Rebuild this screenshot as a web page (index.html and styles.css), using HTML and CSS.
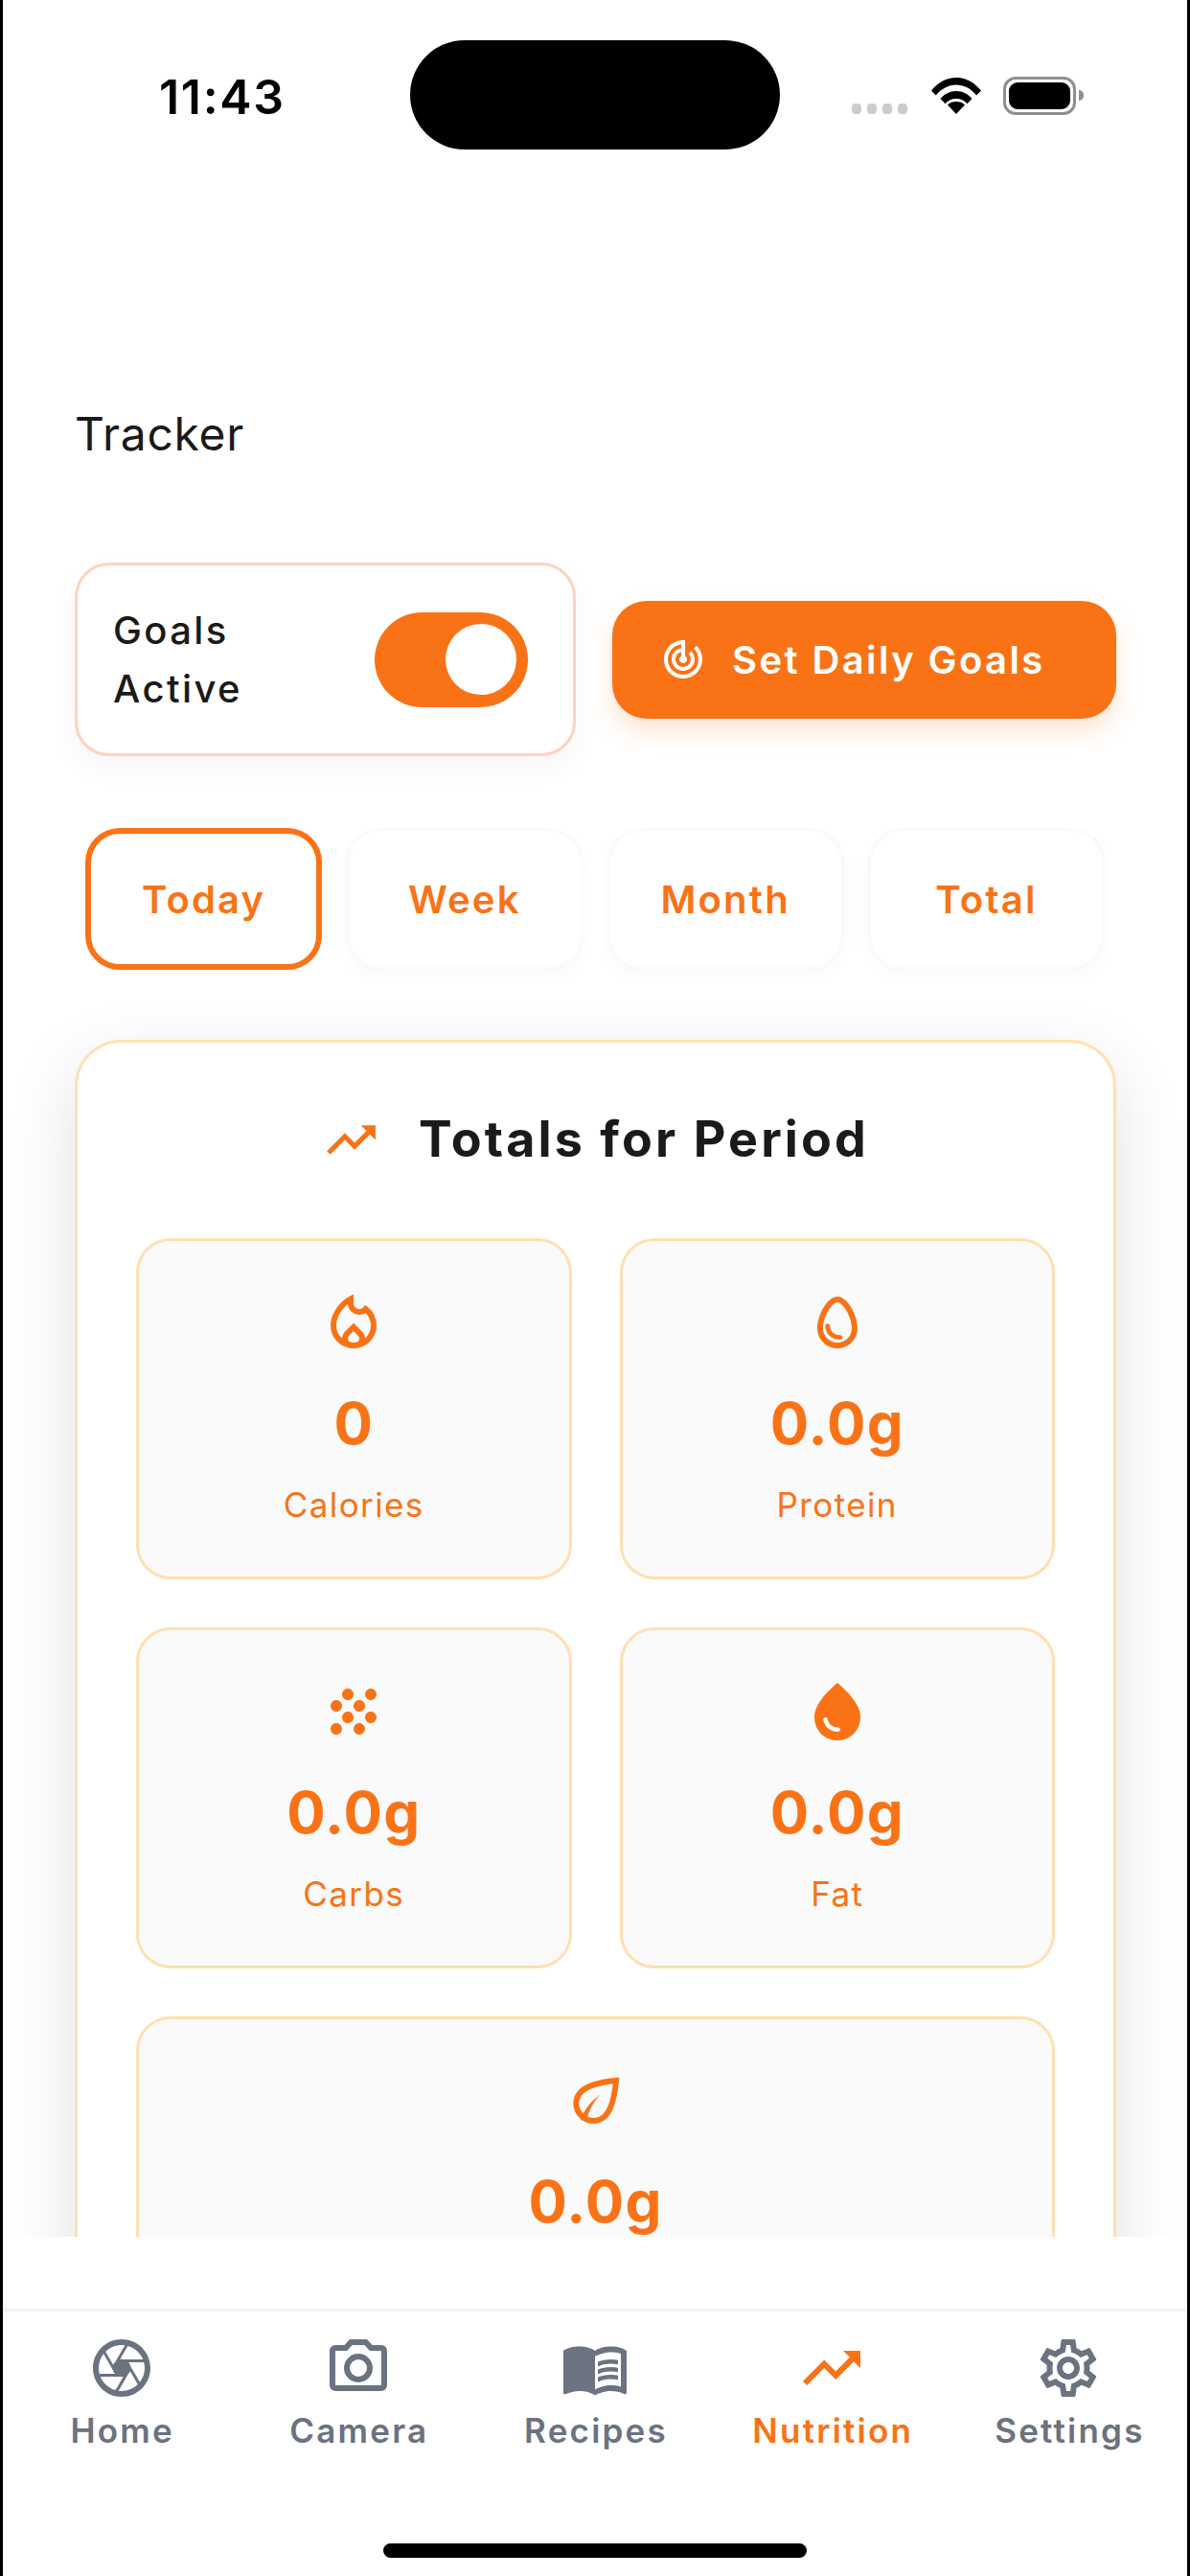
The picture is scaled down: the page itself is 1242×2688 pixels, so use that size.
FILE: index.html
```html
<!DOCTYPE html>
<html lang="en">
<head>
    <meta charset="UTF-8">
    <meta name="viewport" content="width=device-width, initial-scale=1.0">
    <title>Tracker</title>
    <link rel="stylesheet" href="styles.css">
</head>
<body>
    <div class="status-bar">
        <div class="status-time">11:43</div>
        <div class="island"></div>
        <div class="status-right">
            <div class="signal"><span></span><span></span><span></span><span></span></div>
            <svg class="wifi" viewBox="0 0 52 38"><path d="M0 13.5C7 5 16 0 26 0s19 5 26 13.5l-4.8 5C41.500 11.500 34 7.500 26 7.500S10.500 11.500 4.800 18.500z"/><path d="M9.500 22C13.500 17 19.500 14 26 14s12.500 3 16.500 8l-5 5.200C34.500 23.800 30.500 22 26 22s-8.500 1.800-11.500 5.200z"/><path d="M26 38l-9-9.500C19 26 22.500 25 26 25s7 1 9 3.500z"/></svg>
            <div class="battery"><div class="battery-fill"></div></div>
            <div class="battery-cap"></div>
        </div>
    </div>

    <div class="content">
        <div class="page-title">Tracker</div>

        <div class="goals-row">
            <div class="goals-card">
                <div class="goals-label">Goals<br>Active</div>
                <div class="toggle"><div class="toggle-knob"></div></div>
            </div>
            <div class="goals-button">
                <svg class="goals-icon" viewBox="0 0 24 24"><path d="M19.070 4.930l-1.410 1.410C19.100 7.790 20 9.790 20 12c0 4.420-3.580 8-8 8s-8-3.580-8-8c0-4.080 3.050-7.440 7-7.930v2.020C8.160 6.570 6 9.030 6 12c0 3.310 2.690 6 6 6s6-2.690 6-6c0-1.660-.67-3.160-1.760-4.240l-1.410 1.410C15.550 9.900 16 10.900 16 12c0 2.210-1.790 4-4 4s-4-1.790-4-4c0-1.860 1.280-3.410 3-3.860v2.140c-.6.35-1 .98-1 1.720 0 1.100.9 2 2 2s2-.9 2-2c0-.74-.4-1.380-1-1.720V2h-1C6.480 2 2 6.480 2 12s4.480 10 10 10 10-4.480 10-10c0-2.760-1.120-5.260-2.930-7.070z"/></svg>
                <span>Set Daily Goals</span>
            </div>
        </div>

        <div class="tabs">
            <div class="tab active">Today</div>
            <div class="tab">Week</div>
            <div class="tab">Month</div>
            <div class="tab">Total</div>
        </div>

        <div class="totals-card">
            <div class="totals-title">
                <svg class="title-icon" viewBox="0 0 24 24"><path d="M16 6l2.290 2.290-4.880 4.880-4-4L2 16.590 3.410 18l6-6 4 4 6.300-6.290L22 12V6z"/></svg>
                <span>Totals for Period</span>
            </div>
            <div class="stats">
                <div class="stat">
                    <svg class="stat-icon" viewBox="0 0 24 24"><path class="line" d="M11 3.800V5.300c0 1.800 1.400 3 3 3 .9 0 1.600-.3 2.200-1C17.900 8.700 19 10.800 19 13c0 3.900-3.100 7-7 7s-7-3.100-7-7C5 8.600 8.800 4.900 11 3.800z"/><path class="line" d="M12 13.600l-2.100 2.100c-.6.6-.9 1.200-.9 1.900 0 1.400 1.300 2.400 3 2.400s3-1 3-2.400c0-.7-.3-1.300-.9-1.900z"/></svg>
                    <div class="stat-value">0</div>
                    <div class="stat-label">Calories</div>
                </div>
                <div class="stat">
                    <svg class="stat-icon" viewBox="0 0 24 24"><path d="M12 3C8.500 3 5 9.330 5 14c0 3.870 3.130 7 7 7s7-3.130 7-7c0-4.670-3.500-11-7-11zm0 16c-2.760 0-5-2.240-5-5 0-3.950 3.050-9 5-9s5 5.050 5 9c0 2.760-2.240 5-5 5z"/><path class="line thin" d="M8.600 13.200c0 2.200 1.600 4 4.400 4"/></svg>
                    <div class="stat-value">0.0g</div>
                    <div class="stat-label">Protein</div>
                </div>
                <div class="stat">
                    <svg class="stat-icon" viewBox="0 0 24 24"><path d="M10 12c-1.100 0-2 .9-2 2s.9 2 2 2 2-.9 2-2-.9-2-2-2zM6 8c-1.100 0-2 .9-2 2s.9 2 2 2 2-.9 2-2-.9-2-2-2zm0 8c-1.100 0-2 .9-2 2s.9 2 2 2 2-.9 2-2-.9-2-2-2zm12-8c1.100 0 2-.9 2-2s-.9-2-2-2-2 .9-2 2 .9 2 2 2zm-4 8c-1.100 0-2 .9-2 2s.9 2 2 2 2-.9 2-2-.9-2-2-2zm4-4c-1.100 0-2 .9-2 2s.9 2 2 2 2-.9 2-2-.9-2-2-2zm-4-4c-1.100 0-2 .9-2 2s.9 2 2 2 2-.9 2-2-.9-2-2-2zm-4-4c-1.100 0-2 .9-2 2s.9 2 2 2 2-.9 2-2-.9-2-2-2z"/></svg>
                    <div class="stat-value">0.0g</div>
                    <div class="stat-label">Carbs</div>
                </div>
                <div class="stat">
                    <svg class="stat-icon" viewBox="0 0 24 24"><path d="M12 2c-5.330 4.550-8 8.480-8 11.800 0 4.980 3.800 8.200 8 8.200s8-3.220 8-8.200c0-3.320-2.670-7.250-8-11.800zM7.830 14c.37 0 .67.26.74.62.41 2.220 2.280 2.980 3.640 2.870.43-.02.79.32.79.75 0 .4-.32.73-.72.75-2.130.13-4.620-1.090-5.190-4.120-.08-.45.28-.87.74-.87z"/></svg>
                    <div class="stat-value">0.0g</div>
                    <div class="stat-label">Fat</div>
                </div>
                <div class="stat wide">
                    <svg class="stat-icon" viewBox="0 0 24 24"><path class="line" d="M19 5S10.200 5.500 6.900 8.800c-2.400 2.400-2.400 6 0 8.400s6 2.400 8.400 0C18.500 13.800 19 5 19 5z"/><path d="M6.600 18.600c1.200-3.300 3.700-6.500 6.800-8.600-2.300 2.400-3.900 5.400-4.700 9.300z"/></svg>
                    <div class="stat-value">0.0g</div>
                </div>
            </div>
        </div>
    </div>

    <div class="tab-bar">
        <div class="nav-item">
            <svg class="nav-icon" viewBox="0 0 24 24"><path d="M14.250 2.260l-.08-.04-.01.02C13.460 2.090 12.740 2 12 2 6.480 2 2 6.480 2 12s4.480 10 10 10 10-4.480 10-10c0-4.750-3.310-8.720-7.750-9.740zM19.410 9h-7.990l2.710-4.700c2.400.66 4.350 2.420 5.280 4.700zM13.100 4.080L10.270 9l-1.150 2L6.400 6.300C7.840 4.880 9.820 4 12 4c.37 0 .74.03 1.100.08zM5.700 7.090L8.540 12l1.150 2H4.260C4.100 13.360 4 12.690 4 12c0-1.850.64-3.550 1.700-4.910zM4.590 15h7.980l-2.710 4.700c-2.400-.67-4.340-2.420-5.270-4.700zm6.310 4.910L14.890 13l2.720 4.700C16.160 19.120 14.180 20 12 20c-.38 0-.74-.04-1.100-.09zm7.400-3l-4-6.910h5.430c.17.64.27 1.310.27 2 0 1.850-.64 3.550-1.700 4.910z"/><path d="M12 8.800l2.800 1.600v3.200L12 15.200l-2.800-1.600v-3.200z"/></svg>
            <span>Home</span>
        </div>
        <div class="nav-item">
            <svg class="nav-icon" viewBox="0 0 24 24"><path d="M20 4h-3.170L15 2H9L7.170 4H4a2 2 0 0 0-2 2v12a2 2 0 0 0 2 2h16a2 2 0 0 0 2-2V6a2 2 0 0 0-2-2zm0 14H4V6h4.050l1.830-2h4.240l1.830 2H20v12zM12 7a5 5 0 1 0 0 10 5 5 0 0 0 0-10zm0 8a3 3 0 1 1 0-6 3 3 0 0 1 0 6z"/></svg>
            <span>Camera</span>
        </div>
        <div class="nav-item">
            <svg class="nav-icon" viewBox="0 0 24 24"><path d="M21 5c-1.110-.35-2.330-.5-3.500-.5-1.950 0-4.050.4-5.500 1.500-1.450-1.100-3.550-1.500-5.500-1.500S2.450 4.900 1 6v14.650c0 .25.25.5.5.5.1 0 .15-.05.25-.05C3.100 20.450 5.050 20 6.500 20c1.950 0 4.050.4 5.500 1.500 1.350-.85 3.800-1.500 5.500-1.500 1.650 0 3.350.3 4.750 1.050.1.05.15.05.25.05.25 0 .5-.25.5-.5V6c-.6-.45-1.250-.75-2-1zm0 13.500c-1.100-.35-2.300-.5-3.500-.5-1.700 0-4.150.65-5.500 1.500V8c1.350-.85 3.800-1.500 5.500-1.500 1.200 0 2.400.15 3.500.5v11.500z"/><path d="M17.500 10.500c.88 0 1.730.09 2.500.26V9.240c-.79-.15-1.640-.24-2.500-.24-1.700 0-3.240.29-4.500.83v1.660c1.130-.64 2.700-.99 4.500-.99zM13 12.490v1.660c1.130-.64 2.700-.99 4.500-.99.88 0 1.730.09 2.500.26V11.900c-.79-.15-1.640-.24-2.500-.24-1.700 0-3.240.3-4.500.83zM17.500 14.330c-1.700 0-3.240.29-4.500.83v1.660c1.130-.64 2.700-.99 4.500-.99.88 0 1.730.09 2.500.26v-1.520c-.79-.16-1.640-.24-2.500-.24z"/></svg>
            <span>Recipes</span>
        </div>
        <div class="nav-item current">
            <svg class="nav-icon" viewBox="0 0 24 24"><path d="M16 6l2.290 2.290-4.880 4.880-4-4L2 16.590 3.410 18l6-6 4 4 6.300-6.290L22 12V6z"/></svg>
            <span>Nutrition</span>
        </div>
        <div class="nav-item">
            <svg class="nav-icon" viewBox="0 0 24 24"><path d="M19.430 12.980c.04-.32.07-.64.07-.98 0-.34-.03-.66-.07-.98l2.110-1.650c.19-.15.24-.42.12-.64l-2-3.460c-.09-.16-.26-.25-.44-.25-.06 0-.12.01-.17.03l-2.490 1c-.52-.4-1.080-.73-1.690-.98l-.38-2.650C14.460 2.180 14.250 2 14 2h-4c-.25 0-.46.18-.49.42l-.38 2.650c-.61.25-1.170.59-1.690.98l-2.490-1c-.06-.02-.12-.03-.18-.03-.17 0-.34.09-.43.25l-2 3.460c-.13.22-.07.49.12.64l2.110 1.650c-.04.32-.07.65-.07.98 0 .33.03.66.07.98l-2.110 1.650c-.19.15-.24.42-.12.64l2 3.460c.09.16.26.25.44.25.06 0 .12-.01.17-.03l2.490-1c.52.4 1.080.73 1.690.98l.38 2.650c.03.24.24.42.49.42h4c.25 0 .46-.18.49-.42l.38-2.650c.61-.25 1.170-.59 1.690-.98l2.490 1c.06.02.12.03.18.03.17 0 .34-.09.43-.25l2-3.460c.12-.22.07-.49-.12-.64l-2.110-1.650zm-1.980-1.710c.04.31.05.52.05.73 0 .21-.02.43-.05.73l-.14 1.130.89.7 1.080.84-.7 1.210-1.270-.51-1.040-.42-.9.68c-.43.32-.84.56-1.250.73l-1.060.43-.16 1.130-.2 1.350h-1.400l-.19-1.350-.16-1.130-1.060-.43c-.43-.18-.83-.41-1.230-.71l-.91-.7-1.060.43-1.270.51-.7-1.210 1.080-.84.89-.7-.14-1.130c-.03-.31-.05-.54-.05-.74s.02-.43.05-.73l.14-1.130-.89-.7-1.080-.84.7-1.210 1.270.51 1.040.42.9-.68c.43-.32.84-.56 1.250-.73l1.060-.43.16-1.130.2-1.350h1.390l.19 1.350.16 1.130 1.060.43c.43.18.83.41 1.230.71l.91.7 1.060-.43 1.270-.51.7 1.210-1.070.85-.89.7.14 1.130zM12 8c-2.210 0-4 1.790-4 4s1.790 4 4 4 4-1.790 4-4-1.790-4-4-4zm0 6c-1.100 0-2-.9-2-2s.9-2 2-2 2 .9 2 2-.9 2-2 2z"/></svg>
            <span>Settings</span>
        </div>
    </div>
    <div class="home-area"><div class="home-indicator"></div></div>
</body>
</html>
```

FILE: styles.css
```css
* {
    box-sizing: border-box;
}
body {
    margin: 0;
    width: 1242px;
    height: 2688px;
    overflow: hidden;
    display: flex;
    flex-direction: column;
    background-color: #fff;
    border-left: 3px solid #000;
    border-right: 3px solid #000;
    font-family: "Inter", "Liberation Sans", sans-serif;
    color: #1a1a1a;
}

/* status bar */
.status-bar {
    flex: none;
    height: 170px;
    display: flex;
    align-items: flex-start;
    padding-top: 42px;
}
.status-time {
    width: 425px;
    padding: 29px 0 0 163px;
    font-size: 50px;
    line-height: 60px;
    font-weight: 600;
    letter-spacing: 1.7px;
    color: #000;
}
.island {
    width: 386px;
    height: 114px;
    border-radius: 57px;
    background-color: #000;
}
.status-right {
    display: flex;
    align-items: flex-start;
    padding: 38px 0 0 75px;
}
.signal {
    display: flex;
    gap: 6px;
    width: 60px;
    padding-top: 28px;
}
.signal span {
    width: 10px;
    height: 11px;
    border-radius: 4px;
    background-color: #ccc;
}
.wifi {
    width: 52px;
    height: 38px;
    margin: 1px 23px 0;
    fill: #000;
}
.battery {
    width: 76px;
    height: 40px;
    padding: 3px;
    border: 3px solid #8e8e93;
    border-radius: 13px;
}
.battery-fill {
    width: 100%;
    height: 100%;
    border-radius: 9px;
    background-color: #000;
}
.battery-cap {
    width: 5px;
    height: 11px;
    margin: 14px 0 0 3px;
    border-radius: 0 5px 5px 0;
    background-color: #8e8e93;
}

/* scroll area, cut off above the tab bar */
.content {
    flex: none;
    height: 2164px;
    overflow: hidden;
    padding: 254px 74px 0 75px;
}
.page-title {
    height: 58px;
    font-size: 48px;
    line-height: 58px;
    letter-spacing: 0.7px;
    color: #1a1a1a;
}
.goals-row {
    display: flex;
    align-items: center;
    gap: 38px;
    margin-top: 105px;
}
.goals-card {
    width: 523px;
    height: 202px;
    display: flex;
    align-items: center;
    justify-content: space-between;
    padding: 0 47px 0 37px;
    border: 3px solid #ffd2c0;
    border-radius: 36px;
    background-color: #fff;
    box-shadow: 0 12px 30px rgba(0, 0, 0, 0.04);
}
.goals-label {
    font-size: 40px;
    line-height: 61px;
    font-weight: 550;
    letter-spacing: 2.4px;
}
.toggle {
    width: 160px;
    height: 99px;
    display: flex;
    justify-content: flex-end;
    align-items: center;
    padding-right: 12px;
    border-radius: 50px;
    background-color: #f97316;
}
.toggle-knob {
    width: 74px;
    height: 74px;
    border-radius: 50%;
    background-color: #fff;
}
.goals-button {
    width: 526px;
    height: 123px;
    display: flex;
    align-items: center;
    gap: 27px;
    padding-left: 50px;
    border-radius: 36px;
    background-color: #f97316;
    box-shadow: 0 12px 24px rgba(249, 115, 22, 0.2);
    color: #fff;
    font-size: 40px;
    font-weight: 600;
    letter-spacing: 2.4px;
}
.goals-icon {
    width: 48px;
    height: 48px;
    fill: #fff;
}
.tabs {
    display: grid;
    grid-template-columns: repeat(4, 1fr);
    gap: 25px;
    margin: 75px 12px 0 11px;
}
.tab {
    height: 148px;
    display: flex;
    align-items: center;
    justify-content: center;
    border: 3px solid #fafafa;
    border-radius: 36px;
    background-color: #fff;
    box-shadow: 0 6px 14px rgba(0, 0, 0, 0.025);
    color: #f97316;
    font-size: 40px;
    font-weight: 600;
    letter-spacing: 2.2px;
}
.tab.active {
    border: 6px solid #f97316;
    box-shadow: none;
}

/* totals card */
.totals-card {
    margin-top: 73px;
    padding: 70px 61px 0;
    border: 3px solid #ffe0b2;
    border-bottom: 0;
    border-radius: 48px 48px 0 0;
    background-color: #fff;
    box-shadow: 0 24px 72px rgba(0, 0, 0, 0.12);
}
.totals-title {
    display: flex;
    align-items: center;
    justify-content: center;
    gap: 40px;
    font-size: 52px;
    line-height: 62px;
    font-weight: 700;
    letter-spacing: 3.1px;
}
.title-icon {
    width: 61px;
    height: 61px;
    fill: #f97316;
}
.stats {
    display: grid;
    grid-template-columns: 1fr 1fr;
    gap: 50px;
    margin-top: 72px;
}
.stat {
    height: 356px;
    display: flex;
    flex-direction: column;
    align-items: center;
    padding-top: 49px;
    border: 3px solid #ffe0b2;
    border-radius: 36px;
    background-color: #fafafa;
    color: #f97316;
}
.stat.wide {
    grid-column: span 2;
}
.stat-icon {
    flex: none;
    width: 72px;
    height: 72px;
    fill: #f97316;
}
.stat-icon .line {
    fill: none;
    stroke: #f97316;
    stroke-width: 2;
}
.stat-icon .thin {
    stroke-width: 1.6;
    stroke-linecap: round;
}
.stat-value {
    margin-top: 33px;
    font-size: 60px;
    line-height: 72px;
    font-weight: 700;
    letter-spacing: 1.2px;
}
.stat-label {
    margin-top: 28px;
    font-size: 35px;
    line-height: 42px;
    letter-spacing: 1.4px;
}

/* bottom navigation */
.tab-bar {
    flex: none;
    display: flex;
    margin-top: 75px;
    padding-top: 23px;
    border-top: 3px solid #f3f3f3;
}
.nav-item {
    flex: 1;
    display: flex;
    flex-direction: column;
    align-items: center;
    color: #6b7280;
    font-size: 35px;
    line-height: 42px;
    font-weight: 600;
    letter-spacing: 2.2px;
}
.nav-item span {
    margin-right: -2px;
}
.nav-icon {
    width: 72px;
    height: 72px;
    margin-bottom: 8px;
    fill: #6b7280;
}
.nav-item.current {
    color: #f97316;
}
.nav-item.current .nav-icon {
    fill: #f97316;
}
.home-area {
    flex: 1;
    display: flex;
    justify-content: center;
    padding-top: 97px;
}
.home-indicator {
    width: 442px;
    height: 15px;
    border-radius: 8px;
    background-color: #000;
}
```
